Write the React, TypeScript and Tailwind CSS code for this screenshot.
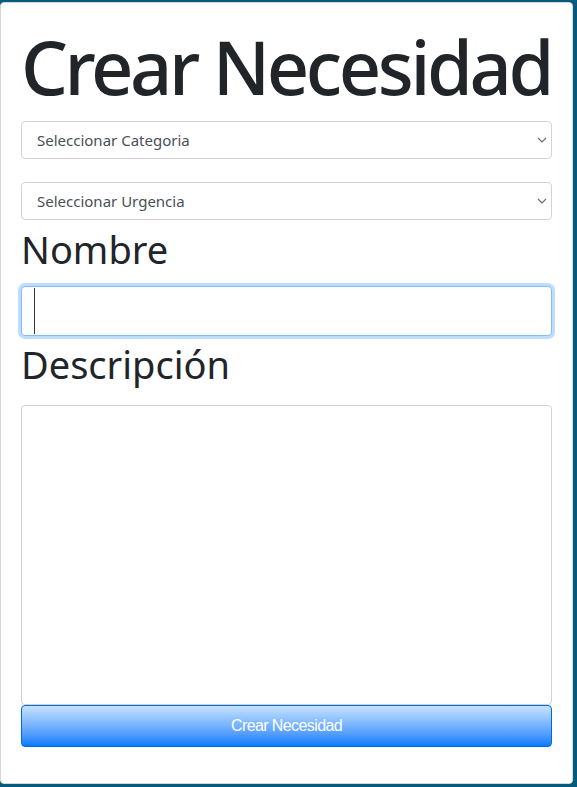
import React from 'react'

const Chevron = () => (
  <svg className="pointer-events-none absolute right-[5px] top-1/2 -translate-y-1/2" width="10" height="6" viewBox="0 0 10 6" fill="none">
    <path d="M1 1l4 4 4-4" stroke="#6b6b6b" strokeWidth="1.2" />
  </svg>
)

const SelectBox = ({ label }: { label: string }) => (
  <div className="relative">
    <select
      defaultValue=""
      className="block h-[38px] w-full appearance-none rounded-[4px] border border-[#ced4da] bg-white pl-[15px] pr-6 text-[15px] text-[#495057] outline-none"
    >
      <option value="">{label}</option>
    </select>
    <Chevron />
  </div>
)

export default function App() {
  return (
    <div
      className="min-h-[787px] bg-[#055a7d] pt-[2px] pr-[4px] pb-[4px]"
      style={{ fontFamily: '"Noto Sans", "Open Sans", sans-serif' }}
    >
      <div className="h-[782px] overflow-hidden rounded-[4px] border border-[#d5d8db] bg-white px-[20px] pt-[20px]">
        <h1 className="whitespace-nowrap text-[74px] leading-[1.2] font-medium tracking-[-3.4px] text-[#212529]">Crear Necesidad</h1>
        <div className="mt-[9px] flex flex-col gap-[23px]">
          <SelectBox label="Seleccionar Categoria" />
          <SelectBox label="Seleccionar Urgencia" />
        </div>
        <label className="mt-[7px] block text-[38px] leading-[1.2] text-[#212529]">Nombre</label>
        <div className="mt-[14px] h-[50px] rounded-[4px] border border-[#80bdff] bg-white shadow-[0_0_0_3px_rgba(0,123,255,0.25)] pl-[12px] pt-[1px]">
          <div className="h-[46px] w-px bg-[#333]" />
        </div>
        <label className="mt-[6px] block text-[38px] leading-[1.2] text-[#212529]">Descripción</label>
        <textarea className="mt-[17px] block h-[300px] w-full resize-none rounded-[4px] border border-[#ced4da] bg-white outline-none" />
        <button
          className="block h-[42px] w-full rounded-[4px] border border-[#0069d9] bg-gradient-to-b from-[#c6e2ff] to-[#007bff] text-[16px] tracking-[-0.6px] text-white"
          style={{ fontFamily: '"Liberation Sans", Arial, sans-serif' }}
        >
          Crear Necesidad
        </button>
      </div>
    </div>
  )
}
